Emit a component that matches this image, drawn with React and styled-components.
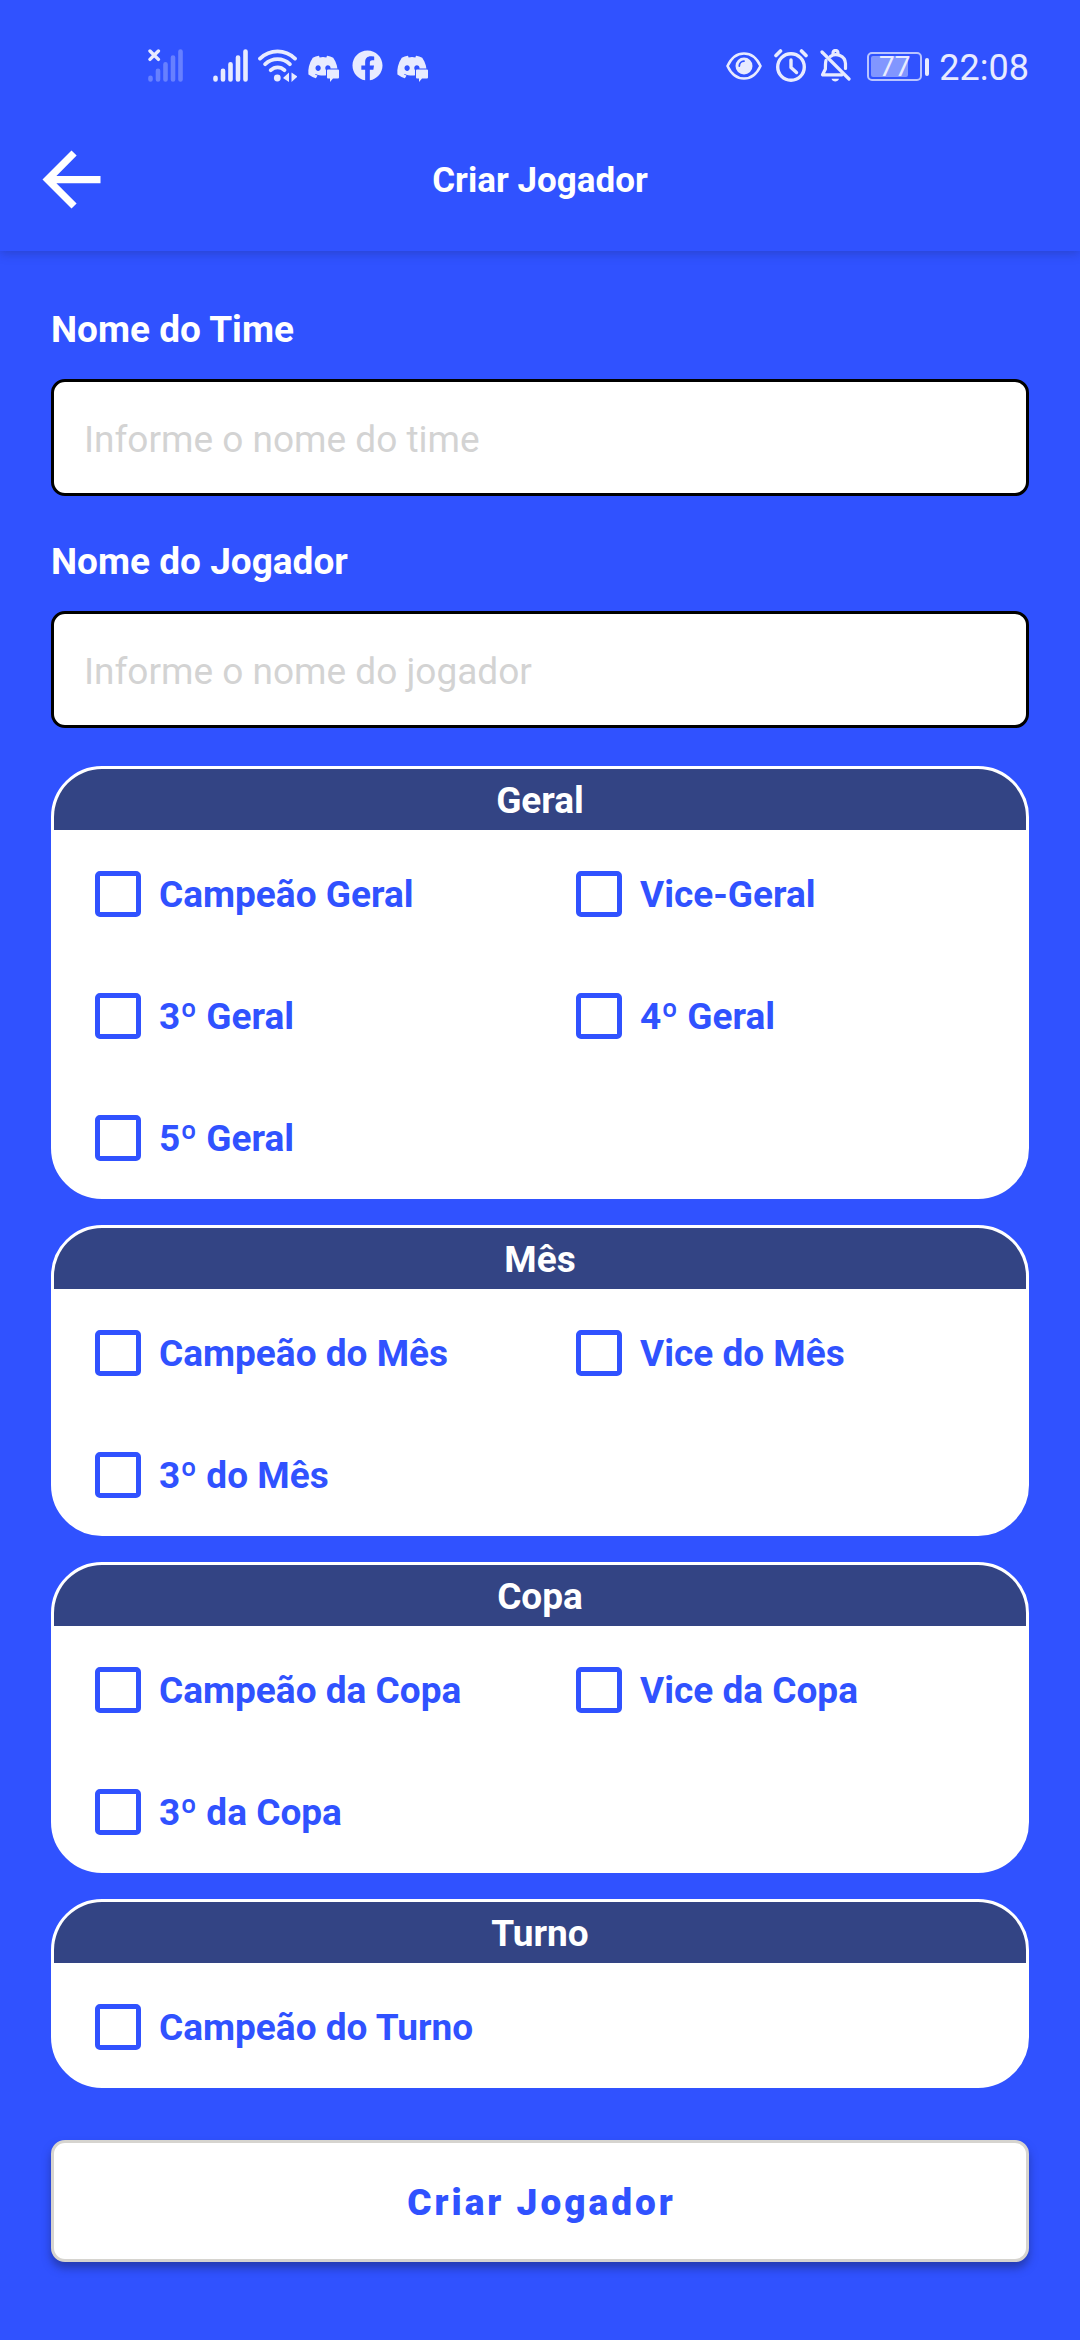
import React from "react";
import styled, { createGlobalStyle } from "styled-components";
import { FaDiscord, FaFacebook } from "react-icons/fa";

const blue = "#3052ff";
const pale = "#e8ebff";

const GlobalStyle = createGlobalStyle`
  *, *::before, *::after { box-sizing: border-box; }
  body { margin: 0; background: ${blue}; font-family: Roboto, "Noto Sans", sans-serif; }
`;

const Page = styled.div`
  min-height: 100vh;
  background: ${blue};
`;

const TopArea = styled.div`
  background: ${blue};
  box-shadow: 0 2px 10px rgba(30, 40, 110, 0.35);
`;

const StatusBar = styled.div`
  display: flex;
  align-items: center;
  justify-content: space-between;
  height: 107px;
  padding: 24px 51px 0 148px;
  color: ${pale};
`;

const StatusGroup = styled.div`
  display: flex;
  align-items: center;
  gap: ${(p) => p.$gap}px;
  margin-right: ${(p) => p.$after || 0}px;
`;

const Clock = styled.time`
  padding-top: 4px;
  font-size: 36px;
  line-height: 44px;
`;

const Battery = styled.div`
  display: flex;
  align-items: center;
  gap: 3px;
  padding-top: 2px;
  &::after {
    content: "";
    width: 4px;
    height: 18px;
    border-radius: 2px;
    background: ${pale};
  }
`;

const BatteryBody = styled.div`
  width: 55px;
  height: 29px;
  padding: 2px;
  border: 2px solid #b9c4ff;
  border-radius: 5px;
`;

const BatteryLevel = styled.div`
  width: 77%;
  height: 21px;
  border-radius: 2px;
  background: #8196ff;
`;

const BatteryText = styled.span`
  display: block;
  width: 47px;
  font-size: 28px;
  line-height: 21px;
  text-align: center;
`;

const AppBar = styled.header`
  display: grid;
  grid-template-columns: 87px 1fr 87px;
  align-items: center;
  height: 144px;
  padding: 0 28px;
`;

const BackButton = styled.button`
  display: flex;
  padding: 0;
  border: 0;
  background: none;
  color: #fff;
`;

const Title = styled.h1`
  margin: 0;
  padding-top: 4px;
  color: #fff;
  font-size: 35px;
  line-height: 44px;
  font-weight: 700;
  text-align: center;
`;

const Form = styled.form`
  display: flex;
  flex-direction: column;
  padding: 57px 51px;
`;

const Field = styled.div`
  display: flex;
  flex-direction: column;
  gap: 27px;
  margin-bottom: ${(p) => (p.$last ? 38 : 44)}px;
`;

const FieldLabel = styled.label`
  color: #fff;
  font-size: 37px;
  line-height: 44px;
  font-weight: 700;
`;

const TextInput = styled.input`
  width: 100%;
  height: 117px;
  padding: 4px 30px 0;
  border: 3px solid #000;
  border-radius: 14px;
  background: #fff;
  color: #000;
  font-family: inherit;
  font-size: 37px;
  &::placeholder { color: #d3d3d3; opacity: 1; }
`;

const Groups = styled.div`
  display: flex;
  flex-direction: column;
  gap: 26px;
`;

const Card = styled.section`
  overflow: hidden;
  border: 3px solid #fff;
  border-radius: 51px;
  background: #fff;
`;

const CardTitle = styled.h2`
  margin: 0;
  padding-top: 2px;
  background: #334484;
  color: #fff;
  font-size: 37px;
  line-height: 59px;
  font-weight: 700;
  text-align: center;
`;

const Options = styled.div`
  display: grid;
  grid-template-columns: 1fr 1fr;
  row-gap: 76px;
  padding: 41px 0 35px 41px;
  column-gap: 31px;
`;

const Option = styled.label`
  display: flex;
  align-items: center;
  gap: 18px;
  height: 46px;
  color: ${blue};
  font-size: 37px;
  line-height: 44px;
  font-weight: 700;
  white-space: nowrap;
`;

const OptionText = styled.span`
  padding-top: 2px;
`;

const Checkbox = styled.input`
  appearance: none;
  flex: none;
  width: 46px;
  height: 46px;
  margin: 0;
  border: 5px solid ${blue};
  border-radius: 5px;
  background: #fff;
  &:checked { background: ${blue}; }
`;

const Submit = styled.button`
  height: 122px;
  margin-top: 52px;
  padding: 2px 0 0 3px;
  border: 3px solid #d6d4cf;
  border-radius: 14px;
  background: #fff;
  color: ${blue};
  box-shadow: 0 6px 8px rgba(25, 35, 100, 0.5);
  font-family: inherit;
  font-size: 37px;
  font-weight: 900;
  letter-spacing: 3px;
`;

const Bars = ({ opacity, crossed }) => (
  <svg width="35" height="33" viewBox="0 0 35 33" fill="none" stroke="currentColor" strokeLinecap="round" strokeWidth="4.6">
    <path opacity={opacity} d="M2.5 28.8v1.7M10 21.8v8.7M17.5 15.3v15.2M25 8.5v22M32.5 2.5v28" />
    {crossed && <path strokeWidth="3.4" d="M2 2l8.4 8.4M10.4 2L2 10.4" />}
  </svg>
);

const Wifi = () => (
  <svg width="39" height="33" viewBox="0 0 39 33" fill="none" stroke="currentColor" strokeLinecap="round" strokeWidth="3.8">
    <path d="M2 9.6C12 0 27 0 37 9.6M7.2 15.2c7-6.7 17.6-6.7 24.6 0M12.8 21.2c4-3.8 9.8-3.800 13.6 0" />
    <circle cx="19.3" cy="29" r="3.4" fill="currentColor" stroke="none" />
    <path d="M31 23.5v9.500l-6-4zM33.500 23.500v9.500l6-5.500z" fill="currentColor" stroke="none" />
  </svg>
);

const Discord = () => (
  <svg width="32" height="33" viewBox="0 0 32 33">
    <FaDiscord x="0" y="2" size={32} />
    <path d="M21 20.5H31a1 1 0 0 1 1 1v7a1 1 0 0 1-1 1h-5l-3 3.500v-3.500h-2a1 1 0 0 1-1-1v-7a1 1 0 0 1 1-1z" fill="currentColor" stroke={blue} strokeWidth="2" paintOrder="stroke" />
  </svg>
);

const Eye = () => (
  <svg width="36" height="28" viewBox="0 0 36 28" fill="none" stroke="currentColor" strokeWidth="2.600">
    <path strokeLinejoin="round" d="M1.500 14C5 6.500 11 1.500 18 1.500S31 6.500 34.500 14C31 21.500 25 26.500 18 26.500S5 21.500 1.500 14z" />
    <circle cx="18" cy="14" r="8.500" fill="currentColor" stroke="none" />
    <path d="M13.300 14a5 5 0 0 1 4.700-4.900" stroke={blue} strokeWidth="1.800" strokeLinecap="round" />
  </svg>
);

const Alarm = () => (
  <svg width="34" height="33" viewBox="0 0 34 33" fill="none" stroke="currentColor" strokeWidth="3.400" strokeLinecap="round" strokeLinejoin="round">
    <circle cx="17" cy="18" r="13.300" />
    <path d="M2 6.500l4.500-4.500M32 6.500L27.500 2" strokeWidth="3.600" />
    <path d="M17 11v7.500l5.500 5" />
  </svg>
);

const BellOff = () => (
  <svg width="31" height="33" viewBox="0 0 31 33" fill="none" stroke="currentColor" strokeWidth="3.200" strokeLinecap="round" strokeLinejoin="round">
    <path d="M2 3l27 27" />
    <path d="M6 11.500c-.7 2-.6 4-.6 8.500L2.500 25.800h19.500" />
    <path d="M10.500 7.300c5.500-3.600 14.500-1 15 7.200v5" />
    <path d="M13 4.500c0-4 5-4 5 0" />
    <path d="M11.500 29.800h7.500c-1 3.500-6.500 3.500-7.500 0z" fill="currentColor" stroke="none" />
  </svg>
);

const BackArrow = () => (
  <svg width="87" height="87" viewBox="0 0 24 24" fill="currentColor">
    <path d="M20 11H7.830l5.590-5.590L12 4l-8 8 8 8 1.410-1.410L7.830 13H20v-2z" />
  </svg>
);

const groups = [
  { title: "Geral", options: ["Campeão Geral", "Vice-Geral", "3º Geral", "4º Geral", "5º Geral"] },
  { title: "Mês", options: ["Campeão do Mês", "Vice do Mês", "3º do Mês"] },
  { title: "Copa", options: ["Campeão da Copa", "Vice da Copa", "3º da Copa"] },
  { title: "Turno", options: ["Campeão do Turno"] },
];

export default function App() {
  return (
    <Page>
      <GlobalStyle />
      <TopArea>
        <StatusBar>
          <StatusGroup $gap={30}>
            <Bars opacity={0.3} crossed />
            <StatusGroup $gap={10}>
              <Bars opacity={1} />
              <Wifi />
              <StatusGroup $gap={13}>
                <Discord />
                <FaFacebook size={31} />
                <Discord />
              </StatusGroup>
            </StatusGroup>
          </StatusGroup>
          <StatusGroup $gap={10}>
            <StatusGroup $gap={12} $after={6}>
              <Eye />
              <Alarm />
              <BellOff />
            </StatusGroup>
            <Battery>
              <BatteryBody>
                <BatteryLevel><BatteryText>77</BatteryText></BatteryLevel>
              </BatteryBody>
            </Battery>
            <Clock>22:08</Clock>
          </StatusGroup>
        </StatusBar>
        <AppBar>
          <BackButton type="button" aria-label="Voltar"><BackArrow /></BackButton>
          <Title>Criar Jogador</Title>
        </AppBar>
      </TopArea>
      <Form onSubmit={(e) => e.preventDefault()}>
        <Field>
          <FieldLabel htmlFor="time">Nome do Time</FieldLabel>
          <TextInput id="time" type="text" placeholder="Informe o nome do time" />
        </Field>
        <Field $last>
          <FieldLabel htmlFor="jogador">Nome do Jogador</FieldLabel>
          <TextInput id="jogador" type="text" placeholder="Informe o nome do jogador" />
        </Field>
        <Groups>
          {groups.map((g) => (
            <Card key={g.title}>
              <CardTitle>{g.title}</CardTitle>
              <Options>
                {g.options.map((o) => (
                  <Option key={o}>
                    <Checkbox type="checkbox" />
                    <OptionText>{o}</OptionText>
                  </Option>
                ))}
              </Options>
            </Card>
          ))}
        </Groups>
        <Submit type="submit">Criar Jogador</Submit>
      </Form>
    </Page>
  );
}
